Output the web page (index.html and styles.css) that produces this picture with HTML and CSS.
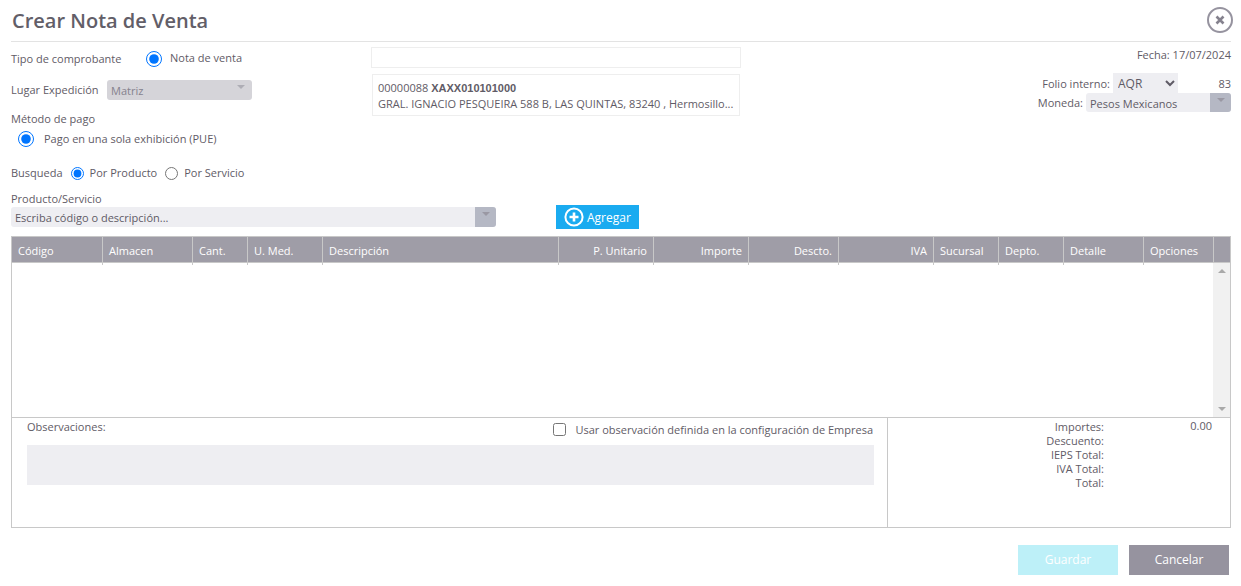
FILE: index.html
```html
<!DOCTYPE html>
<html lang="es">
<head>
    <meta charset="UTF-8">
    <title>Crear Nota de Venta</title>
    <link rel="stylesheet" href="styles.css">
</head>
<body>
    <div class="modal">
        <div class="modal-head">
            <h1>Crear Nota de Venta</h1>
            <button type="button" class="close-btn" aria-label="Cerrar">
                <svg width="26" height="26" viewBox="0 0 26 26">
                    <circle cx="13" cy="13" r="12" fill="none" stroke="#96939f" stroke-width="2"/>
                    <path d="M9.5 9.5l7 7M16.5 9.5l-7 7" fill="none" stroke="#85828e" stroke-width="2.6"/>
                </svg>
            </button>
        </div>

        <div class="top">
            <div class="col-left">
                <div class="row-tipo">
                    <label class="lbl-tipo">Tipo de comprobante</label>
                    <input type="radio" class="radio-big" name="tipo" checked>
                    <span class="radio-text">Nota de venta</span>
                </div>
                <div class="row-lugar">
                    <label class="lbl-lugar">Lugar Expedición</label>
                    <div class="combo combo-matriz">
                        <span>Matriz</span>
                        <i class="caret"></i>
                    </div>
                </div>
                <div class="row-metodo">Método de pago</div>
                <div class="row-pago">
                    <input type="radio" class="radio-big" name="pago" checked>
                    <span>Pago en una sola exhibición (PUE)</span>
                </div>
            </div>
            <div class="col-mid">
                <input type="text" class="client-input">
                <div class="client-box">
                    <div>00000088 <b>XAXX010101000</b></div>
                    <div class="client-addr">GRAL. IGNACIO PESQUEIRA 588 B, LAS QUINTAS, 83240 , Hermosillo...</div>
                </div>
            </div>
            <div class="col-right">
                <div class="fecha">Fecha: 17/07/2024</div>
                <div class="folio">
                    <span>Folio interno:</span>
                    <select class="folio-select"><option>AQR</option></select>
                    <span class="folio-num">83</span>
                </div>
                <div class="moneda">
                    <span>Moneda:</span>
                    <div class="combo combo-moneda">
                        <span>Pesos Mexicanos</span>
                        <b class="combo-btn"><i class="caret"></i></b>
                    </div>
                </div>
            </div>
        </div>

        <div class="busqueda">
            <span>Busqueda</span>
            <input type="radio" name="busq" checked>
            <span>Por Producto</span>
            <input type="radio" name="busq">
            <span>Por Servicio</span>
        </div>

        <div class="prod-label">Producto/Servicio</div>
        <div class="prod-row">
            <div class="combo combo-prod">
                <span>Escriba código o descripción...</span>
                <b class="combo-btn"><i class="caret"></i></b>
            </div>
            <button type="button" class="btn-add">
                <svg width="20" height="20" viewBox="0 0 20 20">
                    <circle cx="10" cy="10" r="8.6" fill="none" stroke="#fff" stroke-width="2"/>
                    <path d="M10 5.5v9M5.5 10h9" stroke="#fff" stroke-width="2.6"/>
                </svg>
                Agregar
            </button>
        </div>

        <div class="grid-box">
            <div class="grid-head">
                <div>Código</div>
                <div>Almacen</div>
                <div>Cant.</div>
                <div>U. Med.</div>
                <div>Descripción</div>
                <div class="num">P. Unitario</div>
                <div class="num">Importe</div>
                <div class="num">Descto.</div>
                <div class="num">IVA</div>
                <div>Sucursal</div>
                <div>Depto.</div>
                <div>Detalle</div>
                <div>Opciones</div>
                <div></div>
            </div>
            <div class="grid-body">
                <div class="scroll">
                    <i class="arrow-up"></i>
                    <i class="arrow-down"></i>
                </div>
            </div>
            <div class="grid-foot">
                <div class="obs">
                    <div class="obs-top">
                        <span>Observaciones:</span>
                        <label class="obs-check">
                            <input type="checkbox">
                            <span>Usar observación definida en la configuración de Empresa</span>
                        </label>
                    </div>
                    <div class="obs-area"></div>
                </div>
                <div class="totals">
                    <div class="total-labels">
                        <div>Importes:</div>
                        <div>Descuento:</div>
                        <div>IEPS Total:</div>
                        <div>IVA Total:</div>
                        <div>Total:</div>
                    </div>
                    <div class="total-value">0.00</div>
                </div>
            </div>
        </div>

        <div class="actions">
            <button type="button" class="btn btn-save">Guardar</button>
            <button type="button" class="btn btn-cancel">Cancelar</button>
        </div>
    </div>
</body>
</html>
```

FILE: styles.css
```css
* {
    box-sizing: border-box;
}
body {
    margin: 0;
    background-color: #fff;
    color: #5f5b66;
    font-family: "Open Sans", Arial, sans-serif;
    font-size: 11px;
    line-height: 14px;
}
input[type="radio"], input[type="checkbox"] {
    margin: 0;
}
.modal {
    padding: 0 10px 0 11px;
    height: 586px;
    overflow: hidden;
}
.modal-head {
    height: 42px;
    border-bottom: 1px solid #e3e3e3;
    display: flex;
    justify-content: space-between;
    padding-top: 7px;
}
h1 {
    margin: 0 0 0 1px;
    font-size: 20px;
    line-height: 28px;
    font-weight: 600;
    color: #625e68;
}
.close-btn {
    width: 26px;
    height: 26px;
    padding: 0;
    margin-right: -2px;
    border: none;
    background: none;
}
.close-btn svg {
    display: block;
}
.top {
    display: flex;
    height: 123px;
}
.col-left {
    width: 360px;
}
.row-tipo {
    display: flex;
    align-items: center;
    height: 18px;
    margin-top: 8px;
}
.lbl-tipo {
    width: 135px;
}
.radio-big {
    width: 16px;
    height: 16px;
}
.radio-text {
    margin: -2px 0 0 8px;
}
.row-lugar {
    display: flex;
    align-items: center;
    height: 20px;
    margin-top: 12px;
}
.lbl-lugar {
    width: 96px;
}
.combo {
    position: relative;
    display: flex;
    align-items: center;
    background-color: #eeeef2;
    border-radius: 3px;
}
.combo-matriz {
    width: 145px;
    height: 20px;
    padding: 2px 4px 0;
    background-color: #d5d4d9;
    color: #85828e;
}
.combo-matriz .caret {
    position: absolute;
    top: 5px;
    right: 7px;
    border-top-color: #aeadb5;
}
.caret {
    display: block;
    width: 0;
    height: 0;
    border-left: 4px solid transparent;
    border-right: 4px solid transparent;
    border-top: 4px solid #9a98a3;
}
.combo-btn {
    position: absolute;
    top: 0;
    right: 0;
    bottom: 0;
    width: 21px;
    background-color: #b5b8c4;
    border-radius: 0 3px 3px 0;
    display: flex;
    justify-content: center;
    padding-top: 5px;
}
.row-metodo {
    margin-top: 12px;
}
.row-pago {
    display: flex;
    align-items: center;
    gap: 10px;
    margin: 4px 0 0 7px;
    height: 18px;
}
.col-mid {
    width: 370px;
}
.client-input {
    display: block;
    width: 370px;
    height: 21px;
    margin-top: 5px;
    border: 1px solid #eee;
    background: #fff;
}
.client-box {
    width: 368px;
    height: 42px;
    margin: 6px 0 0 1px;
    padding: 5px;
    border: 1px solid #eee;
    line-height: 15px;
}
.client-box b {
    font-family: "Liberation Sans", Arial, sans-serif;
}
.client-addr {
    white-space: nowrap;
}
.col-right {
    flex: 1;
    text-align: right;
}
.fecha {
    margin-top: 6px;
}
.folio {
    display: flex;
    justify-content: flex-end;
    align-items: center;
    height: 20px;
    margin-top: 11px;
}
.folio span {
    padding-top: 2px;
}
.folio-select {
    width: 65px;
    height: 20px;
    margin-left: 3px;
    padding-left: 1px;
    border: none;
    border-radius: 0;
    background-color: #eeeef2;
    color: #5f5b66;
    font-family: inherit;
    font-size: 12px;
}
.folio-num {
    width: 53px;
}
.moneda {
    display: flex;
    justify-content: flex-end;
    align-items: center;
    height: 19px;
}
.combo-moneda {
    width: 145px;
    height: 19px;
    margin-left: 3px;
    padding: 2px 4px 0;
    text-align: left;
}
.busqueda {
    display: flex;
    align-items: center;
    height: 16px;
}
.busqueda input {
    margin: 0 6px 0 8px;
}
.prod-label {
    margin-top: 11px;
    height: 15px;
}
.prod-row {
    display: flex;
    align-items: flex-start;
    height: 22px;
}
.combo-prod {
    width: 485px;
    height: 20px;
    padding: 1px 4px 0;
}
.btn-add {
    display: flex;
    align-items: center;
    gap: 3px;
    width: 83px;
    height: 24px;
    margin: -2px 0 0 60px;
    padding: 0 0 0 8px;
    border: none;
    background-color: #1aabf0;
    color: #fff;
    font-family: inherit;
    font-size: 12px;
}
.grid-box {
    margin-top: 7px;
    border: 1px solid #c8c8c8;
}
.grid-head {
    display: grid;
    grid-template-columns: 91px 90px 55px 75px 236px 95px 95px 90px 95px 65px 65px 80px 70px 1fr;
    height: 26px;
    background-color: #9f9da7;
    border-bottom: 1px solid #c8c8c8;
    color: #fff;
    line-height: 28px;
}
.grid-head div {
    padding: 0 6px;
    border-right: 1px solid #c8c8c8;
}
.grid-head div:last-child {
    border-right: none;
}
.grid-head .num {
    text-align: right;
}
.grid-body {
    display: flex;
    justify-content: flex-end;
    height: 155px;
    border-bottom: 1px solid #c8c8c8;
}
.scroll {
    width: 17px;
    background-color: #f1f1f1;
    display: flex;
    flex-direction: column;
    justify-content: space-between;
    align-items: center;
    padding: 6px 0;
}
.arrow-up, .arrow-down {
    display: block;
    width: 0;
    height: 0;
    border-left: 4px solid transparent;
    border-right: 4px solid transparent;
}
.arrow-up {
    border-bottom: 4px solid #a9a9a9;
}
.arrow-down {
    border-top: 4px solid #a9a9a9;
}
.grid-foot {
    display: flex;
    height: 109px;
}
.obs {
    width: 876px;
    padding: 0 13px 0 15px;
    border-right: 1px solid #c8c8c8;
}
.obs-top {
    display: flex;
    justify-content: space-between;
    height: 27px;
    padding: 2px 1px 0 0;
}
.obs-check {
    display: flex;
    align-items: flex-start;
    gap: 9px;
}
.obs-check input {
    margin-top: 3px;
}
.obs-check span {
    margin-top: 3px;
}
.obs-area {
    height: 40px;
    background-color: #eeeef2;
}
.totals {
    flex: 1;
    display: flex;
    padding-top: 2px;
}
.total-labels {
    width: 216px;
    text-align: right;
}
.total-value {
    width: 108px;
    text-align: right;
    margin-top: -1px;
}
.actions {
    display: flex;
    justify-content: flex-end;
    gap: 11px;
    margin-top: 17px;
    padding-right: 2px;
}
.btn {
    width: 100px;
    height: 30px;
    padding: 0 0 2px;
    border: none;
    color: #fff;
    font-family: inherit;
    font-size: 12px;
}
.btn-save {
    background-color: #bdf0f8;
}
.btn-cancel {
    background-color: #96939f;
}
```
